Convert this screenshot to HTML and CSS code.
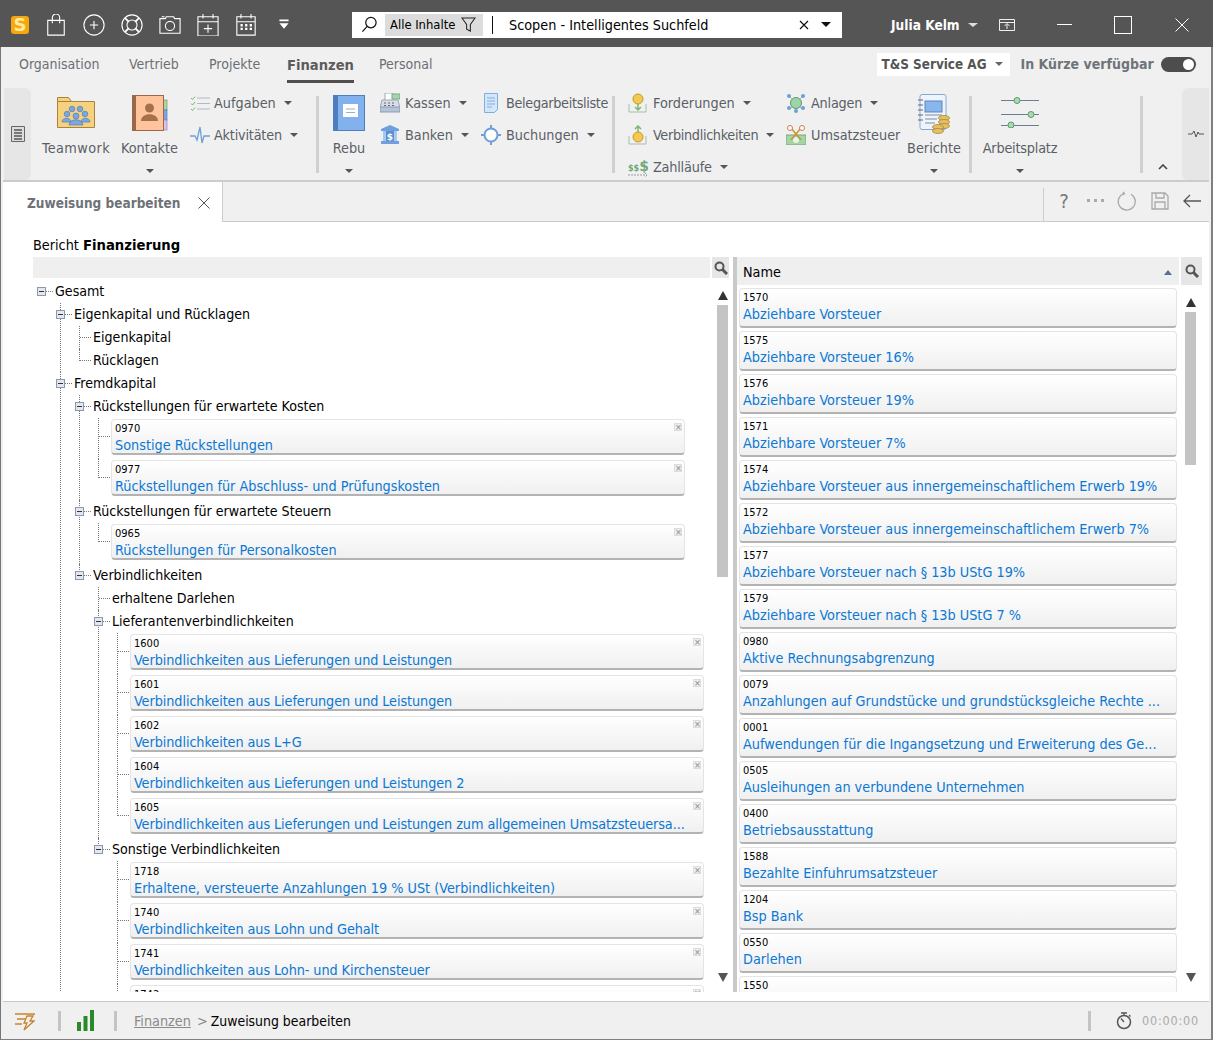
FILE: index.html
```html
<!DOCTYPE html>
<html lang="de">
<head>
<meta charset="utf-8">
<title>Zuweisung bearbeiten</title>
<link rel="stylesheet" href="styles.css">
</head>
<body>
<div class="app">
  <header class="topbar">
    <span class="logo">S</span>
    <svg class="top-ic" viewBox="0 0 24 24"><path d="M3 7h18v16H3zM8 10V4a4 4 0 0 1 8 0v6"/></svg>
    <svg class="top-ic" viewBox="0 0 24 24"><circle cx="12" cy="12" r="11"/><path d="M12 7.500v9M7.500 12h9"/></svg>
    <svg class="top-ic" viewBox="0 0 24 24"><circle cx="12" cy="12" r="11"/><circle cx="12" cy="12" r="5.500"/><path d="M4.500 4.500l4 4M19.500 4.500l-4 4M4.500 19.500l4-4M19.500 19.500l-4-4" class="thick"/></svg>
    <svg class="top-ic" viewBox="0 0 24 24"><path d="M1 5h6l1-2h8l1 2h6v16H1z"/><circle cx="12" cy="13" r="5"/><path d="M3 3h3"/></svg>
    <svg class="top-ic" viewBox="0 0 24 24"><path d="M1 3h22v21H1zM1 8.500h22M6.500 0v5M17.500 0v5M12 11.500v9M7.500 16h9"/></svg>
    <svg class="top-ic" viewBox="0 0 24 24"><path d="M2 3h20v20H2zM2 8.500h20M6.500 0v5M17.500 0v5"/><path class="dots" d="M6 11h2.500v2.500H6zM11 11h2.500v2.500H11zM16 11h2.500v2.500H16zM6 15h2.500v2.500H6zM11 15h2.500v2.500H11zM16 15h2.500v2.500H16z"/></svg>
    <svg class="top-ic" viewBox="0 0 24 24"><path class="solid" d="M7 6h10v2H7zM7 10h10l-5 6z"/></svg>
    <div class="search">
      <svg class="search-ic" viewBox="0 0 18 18"><circle cx="10.500" cy="7" r="5.500"/><path d="M6.500 11L1.500 16.500"/></svg>
      <div class="scope"><span>Alle Inhalte</span><svg viewBox="0 0 16 16"><path d="M1 1h14L10 8v7l-4-2V8z"/></svg></div>
      <span class="search-sep"></span>
      <span class="search-text">Scopen - Intelligentes Suchfeld</span>
      <svg class="search-x" viewBox="0 0 10 10"><path d="M1 1l8 8M9 1l-8 8"/></svg>
      <span class="tri-dark"></span>
    </div>
    <span class="user">Julia Kelm</span>
    <span class="tri-light"></span>
    <svg class="win-tray" viewBox="0 0 16 12"><path d="M.5 .5h15v11H.5zM.5 3.500h15M8 10V5M5.500 7L8 4.500 10.500 7"/></svg>
    <span class="win-min"></span>
    <span class="win-max"></span>
    <svg class="win-close" viewBox="0 0 14 14"><path d="M.5 .5l13 13M13.500 .5l-13 13"/></svg>
  </header>

  <div class="workspace">
  <nav class="navrow">
    <a class="nav-tab t1">Organisation</a>
    <a class="nav-tab t2">Vertrieb</a>
    <a class="nav-tab t3">Projekte</a>
    <a class="nav-tab t4 active">Finanzen</a>
    <a class="nav-tab t5">Personal</a>
    <div class="company"><span>T&amp;S Service AG</span><i class="tri-gray"></i></div>
    <span class="soon">In Kürze verfügbar</span>
    <span class="toggle"><i></i></span>
  </nav>

  <section class="ribbon">
    <div class="handle hl"><svg viewBox="0 0 14 16"><path d="M.5 .5h13v15H.5z" fill="#ddd" stroke="#666"/><path d="M3 4h8M3 7h8M3 10h8M3 13h8" stroke="#555" stroke-width="1.500"/></svg></div>

    <div class="big w-team">
      <svg class="big-ic" width="38" height="31" viewBox="0 0 38 31"><path d="M.5 4.500V.5h11l3 4h23v26H.500z" fill="#f6d27f" stroke="#a9823c"/><path d="M.5 4.500h14" stroke="#a9823c"/><g fill="#7ea6dd" stroke="#4e7fc0" stroke-width=".7"><circle cx="15" cy="12" r="2.800"/><circle cx="23" cy="12" r="2.800"/><circle cx="10" cy="17" r="2.800"/><circle cx="28" cy="17" r="2.800"/><circle cx="19" cy="19" r="3"/><path d="M5 25c0-5 9-5 9 0zM24 25c0-5 9-5 9 0zM12 28c0-7 14-7 14 0z"/></g></svg>
      <span class="big-label">Teamwork</span>
      <i class="tri-none"></i>
    </div>
    <div class="big w-kont">
      <svg class="big-ic" width="36" height="36" viewBox="0 0 36 36"><rect x="31" y="5" width="4" height="10" fill="#a9d6a9" stroke="#6f9a6f" stroke-width=".7"/><rect x="31" y="15" width="4" height="10" fill="#7ea6dd" stroke="#4e7fc0" stroke-width=".7"/><rect x="31" y="25" width="4" height="10" fill="#d8c4ea" stroke="#9c80b8" stroke-width=".7"/><rect x=".5" y=".5" width="31" height="35" fill="#ffc49c" stroke="#98694a"/><rect width="4" height="36" fill="#98694a"/><circle cx="17.500" cy="13" r="4.500" fill="#a5714d"/><path d="M9 26c0-9 17-9 17 0z" fill="#a5714d"/></svg>
      <span class="big-label">Kontakte</span>
      <i class="tri"></i>
    </div>

    <div class="col c-aufg">
      <div class="small"><svg class="s-ic" viewBox="0 0 20 16"><path d="M1 3l1.500 1.500L5 1.500M1 8.500l1.500 1.500L5 7M1 14l1.500 1.500L5 12.500" stroke="#74b874" fill="none"/><path d="M7 3h13M7 8.500h13M7 14h13" stroke="#b0b8c0" fill="none"/></svg><span>Aufgaben</span><i class="tri"></i></div>
      <div class="small"><svg class="s-ic" viewBox="0 0 20 18"><path d="M0 10h5l2 4 3-13 2 16 2-7h6" stroke="#6f9fd8" fill="none" stroke-width="1.300"/></svg><span class="tight">Aktivitäten</span><i class="tri"></i></div>
    </div>
    <span class="vsep s1"></span>

    <div class="big w-rebu">
      <svg class="big-ic" width="32" height="36" viewBox="0 0 32 36"><rect x=".5" y=".5" width="31" height="35" fill="#82b2ee" stroke="#4d7fc0"/><rect width="5" height="36" fill="#4d7fc0"/><rect x="10" y="9" width="15" height="13" fill="#fff"/><path d="M13 14h9M13 17.500h9" stroke="#9bb0c8"/></svg>
      <span class="big-label">Rebu</span>
      <i class="tri"></i>
    </div>

    <div class="col c-kass">
      <div class="small"><svg class="s-ic" viewBox="0 0 20 20"><rect x="5" y="0" width="8" height="8" fill="#fff" stroke="#9aa"/><rect x="12" y="1" width="8" height="5" fill="#a8d4a8" stroke="#7a9"/><path d="M2 7h16l2 8H0z" fill="#d9dee6" stroke="#9aa6b4"/><rect y="14" width="20" height="5" fill="#b5c4d8" stroke="#8a9cb4"/><path d="M4 10h2M8 10h2M12 10h2M4 12.500h2M8 12.500h2M12 12.500h2" stroke="#667"/></svg><span>Kassen</span><i class="tri"></i></div>
      <div class="small"><svg class="s-ic" viewBox="0 0 20 20"><path d="M10 0l9 4v2H1V4z" fill="#6f9fdc"/><rect x="3" y="6" width="14" height="10" fill="#a9c8f0"/><rect x="6" y="6" width="8" height="10" fill="#5a8fd4"/><rect x="1" y="16" width="18" height="3" fill="#6f9fdc"/><text x="10" y="15" class="bank-s">$</text></svg><span>Banken</span><i class="tri"></i></div>
    </div>
    <div class="col c-bele">
      <div class="small"><svg class="s-ic" viewBox="0 0 20 20"><path d="M3.500 .5h13v16l-3 3h-10z" fill="#d4e6fa" stroke="#7eaee0"/><path d="M6 5h8M6 8h8M6 11h8M6 14h5" stroke="#7eaee0"/></svg><span class="tighter">Belegarbeitsliste</span></div>
      <div class="small"><svg class="s-ic" viewBox="0 0 20 20"><circle cx="10" cy="10" r="6.500" fill="#fff" stroke="#6f9fd8" stroke-width="2"/><path d="M10 0v4M10 16v4M0 10h4M16 10h4" stroke="#6f9fd8" stroke-width="2"/></svg><span>Buchungen</span><i class="tri"></i></div>
    </div>
    <span class="vsep s2"></span>

    <div class="col c-ford">
      <div class="small"><svg class="s-ic" viewBox="0 0 20 20"><path d="M1 11v8h17v-8" fill="none" stroke="#a9bcb0"/><path d="M10 11v6m-3-3l3 3 3-3" stroke="#7ab87a" fill="none" stroke-width="1.500"/><circle cx="10" cy="6" r="5" fill="#f5c850" stroke="#c49a30"/></svg><span>Forderungen</span><i class="tri"></i></div>
      <div class="small"><svg class="s-ic" viewBox="0 0 20 20"><path d="M1 11v8h17v-8" fill="none" stroke="#a9bcb0"/><path d="M10 7V1M7 4l3-3 3 3" stroke="#7ab87a" fill="none" stroke-width="1.500"/><circle cx="10" cy="12" r="5" fill="#f5c850" stroke="#c49a30"/></svg><span class="tighter">Verbindlichkeiten</span><i class="tri"></i></div>
      <div class="small"><svg class="s-ic" viewBox="0 0 20 20"><text x="0" y="14" class="sss">$$<tspan class="sss-big">$</tspan></text><path d="M0 18h19m-2-2l2 2-2 2" stroke="#99a" fill="none" stroke-dasharray="2 1"/></svg><span class="tight">Zahlläufe</span><i class="tri"></i></div>
    </div>
    <div class="col c-anla">
      <div class="small"><svg class="s-ic" viewBox="0 0 20 20"><path d="M3 3l14 14M17 3L3 17" stroke="#9bb"/><circle cx="10" cy="10" r="5.500" fill="#9fd3a8" stroke="#5c9a6c"/><circle cx="3" cy="3" r="2" fill="#6f9fd8"/><circle cx="17" cy="3" r="2" fill="#6f9fd8"/><circle cx="3" cy="15" r="2" fill="#6f9fd8"/><circle cx="17" cy="15" r="2" fill="#6f9fd8"/><circle cx="10" cy="18" r="2" fill="#6f9fd8"/></svg><span class="tight">Anlagen</span><i class="tri"></i></div>
      <div class="small"><svg class="s-ic" viewBox="0 0 20 20"><rect y="10" width="20" height="10" fill="#a6d4a6" stroke="#78a878"/><circle cx="10" cy="15" r="3" fill="#e8f4e8"/><path d="M5 3l10 12M15 3L5 15" stroke="#c9953c" stroke-width="1.600"/><circle cx="4" cy="3" r="2.500" fill="#fff" stroke="#d07a50"/><circle cx="16" cy="3" r="2.500" fill="#fff" stroke="#d07a50"/></svg><span>Umsatzsteuer</span></div>
    </div>

    <div class="big w-beri">
      <svg class="big-ic tall" width="34" height="40" viewBox="0 0 34 40"><rect x="3" y=".5" width="26" height="35" rx="2" fill="#eef4fb" stroke="#87a9d0"/><path d="M1 6h5M1 11h5M1 16h5M1 21h5M1 26h5" stroke="#667"/><rect x="8" y="7" width="17" height="11" fill="#8ab6ee" stroke="#5a86bd"/><path d="M8 21h17M8 25h12M8 29h10" stroke="#7b8da0"/><g fill="#e7bf63" stroke="#a9863a" stroke-width=".8"><ellipse cx="27" cy="24" rx="5.500" ry="2.500"/><ellipse cx="27" cy="28" rx="5.500" ry="2.500"/><ellipse cx="27" cy="32" rx="5.500" ry="2.500"/><ellipse cx="21" cy="33" rx="5.500" ry="2.500"/><ellipse cx="21" cy="37" rx="5.500" ry="2.500"/></g></svg>
      <span class="big-label">Berichte</span>
      <i class="tri"></i>
    </div>
    <span class="vsep s3"></span>
    <div class="big w-arbe">
      <svg class="big-ic" width="38" height="31" viewBox="0 0 38 31"><path d="M0 3.500h38M0 17.500h38M0 28.500h38" stroke="#6b7f92"/><g fill="#a8dcae" stroke="#5c9a6c"><circle cx="16" cy="3.500" r="3"/><circle cx="30" cy="17.500" r="3"/><circle cx="10" cy="28" r="3"/></g></svg>
      <span class="big-label">Arbeitsplatz</span>
      <i class="tri"></i>
    </div>
    <span class="vsep s4"></span>
    <svg class="collapse" viewBox="0 0 10 6"><path d="M1 5l4-4 4 4" fill="none" stroke="#444" stroke-width="1.600"/></svg>
    <div class="handle hr"><svg viewBox="0 0 16 10"><path d="M0 5h4l2-3 2 6 2-5 1 2h5" fill="none" stroke="#555"/></svg></div>
  </section>

  <div class="tabstrip">
    <div class="doc-tab"><span>Zuweisung bearbeiten</span><svg viewBox="0 0 12 12"><path d="M.5 .5l11 11M11.500 .5l-11 11"/></svg></div>
    <div class="tools">
      <span class="help">?</span>
      <svg class="tool t-more" viewBox="0 0 18 4"><path d="M1 0h3v3H1zM8 0h3v3H8zM15 0h3v3h-3z"/></svg>
      <svg class="tool t-redo" viewBox="0 0 20 20"><path d="M7 2.500A8.500 8.500 0 1 0 14 3.200M6 1l1.500 1.700L5 4"/></svg>
      <svg class="tool t-save" viewBox="0 0 18 18"><path d="M1 1h13l3 3v13H1zM5 1v5h8V1M4 17v-7h10v7"/></svg>
      <svg class="tool t-back" viewBox="0 0 18 14"><path d="M18 7H1M7 1L1 7l6 6"/></svg>
    </div>
  </div>

  <main class="content">
    <h1 class="report">Bericht <b>Finanzierung</b></h1>
    <div class="panels">
      <section class="panel-left">
        <div class="head-left">
          <div class="bar"></div>
          <button class="find short"><svg viewBox="0 0 14 14"><circle cx="5.500" cy="5.500" r="4"/><path d="M8.500 8.500l4.500 4.500" class="fat"/></svg></button>
        </div>
        <div class="body-left">
          <div class="tree-clip">
            <ul class="tree root">
              <li class="node"><div class="row"><i class="box"></i><span>Gesamt</span></div>
                <ul class="tree">
                  <li class="node"><div class="row"><i class="box"></i><span>Eigenkapital und Rücklagen</span></div>
                    <ul class="tree">
                      <li class="leaf"><div class="row">Eigenkapital</div></li>
                      <li class="leaf"><div class="row">Rücklagen</div></li>
                    </ul>
                  </li>
                  <li class="node more"><div class="row"><i class="box"></i><span>Fremdkapital</span></div>
                    <ul class="tree">
                      <li class="node"><div class="row"><i class="box"></i><span>Rückstellungen für erwartete Kosten</span></div>
                        <ul class="tree">
                          <li class="item"><div class="card"><small>0970</small><i class="rm"></i><a>Sonstige Rückstellungen</a></div></li>
                          <li class="item"><div class="card"><small>0977</small><i class="rm"></i><a>Rückstellungen für Abschluss- und Prüfungskosten</a></div></li>
                        </ul>
                      </li>
                      <li class="node"><div class="row"><i class="box"></i><span>Rückstellungen für erwartete Steuern</span></div>
                        <ul class="tree">
                          <li class="item"><div class="card"><small>0965</small><i class="rm"></i><a>Rückstellungen für Personalkosten</a></div></li>
                        </ul>
                      </li>
                      <li class="node"><div class="row"><i class="box"></i><span>Verbindlichkeiten</span></div>
                        <ul class="tree">
                          <li class="leaf"><div class="row">erhaltene Darlehen</div></li>
                          <li class="node"><div class="row"><i class="box"></i><span>Lieferantenverbindlichkeiten</span></div>
                            <ul class="tree">
                              <li class="item"><div class="card v"><small>1600</small><i class="rm"></i><a>Verbindlichkeiten aus Lieferungen und Leistungen</a></div></li>
                              <li class="item"><div class="card v"><small>1601</small><i class="rm"></i><a>Verbindlichkeiten aus Lieferungen und Leistungen</a></div></li>
                              <li class="item"><div class="card v"><small>1602</small><i class="rm"></i><a>Verbindlichkeiten aus L+G</a></div></li>
                              <li class="item"><div class="card v"><small>1604</small><i class="rm"></i><a>Verbindlichkeiten aus Lieferungen und Leistungen 2</a></div></li>
                              <li class="item"><div class="card v"><small>1605</small><i class="rm"></i><a>Verbindlichkeiten aus Lieferungen und Leistungen zum allgemeinen Umsatzsteuersa...</a></div></li>
                            </ul>
                          </li>
                          <li class="node"><div class="row"><i class="box"></i><span>Sonstige Verbindlichkeiten</span></div>
                            <ul class="tree">
                              <li class="item"><div class="card"><small>1718</small><i class="rm"></i><a>Erhaltene, versteuerte Anzahlungen 19 % USt (Verbindlichkeiten)</a></div></li>
                              <li class="item"><div class="card v"><small>1740</small><i class="rm"></i><a>Verbindlichkeiten aus Lohn und Gehalt</a></div></li>
                              <li class="item"><div class="card v"><small>1741</small><i class="rm"></i><a>Verbindlichkeiten aus Lohn- und Kirchensteuer</a></div></li>
                              <li class="item more"><div class="card"><small>1742</small><i class="rm"></i></div></li>
                            </ul>
                          </li>
                        </ul>
                      </li>
                    </ul>
                  </li>
                </ul>
              </li>
            </ul>
          </div>
          <div class="scroll sl"><i class="up"></i><b class="thumb th-l"></b><i class="down"></i></div>
        </div>
      </section>

      <div class="splitter"></div>

      <section class="panel-right">
        <div class="head-right">
          <div class="name-bar"><span>Name</span><i class="sort"></i></div>
          <button class="find tall"><svg viewBox="0 0 14 14"><circle cx="5.500" cy="5.500" r="4"/><path d="M8.500 8.500l4.500 4.500" class="fat"/></svg></button>
        </div>
        <div class="body-right">
          <div class="list">
            <div class="lcard"><small>1570</small><a>Abziehbare Vorsteuer</a></div>
            <div class="lcard"><small>1575</small><a>Abziehbare Vorsteuer 16%</a></div>
            <div class="lcard"><small>1576</small><a>Abziehbare Vorsteuer 19%</a></div>
            <div class="lcard"><small>1571</small><a>Abziehbare Vorsteuer 7%</a></div>
            <div class="lcard"><small>1574</small><a>Abziehbare Vorsteuer aus innergemeinschaftlichem Erwerb 19%</a></div>
            <div class="lcard"><small>1572</small><a>Abziehbare Vorsteuer aus innergemeinschaftlichem Erwerb 7%</a></div>
            <div class="lcard"><small>1577</small><a>Abziehbare Vorsteuer nach § 13b UStG 19%</a></div>
            <div class="lcard"><small>1579</small><a>Abziehbare Vorsteuer nach § 13b UStG 7 %</a></div>
            <div class="lcard"><small>0980</small><a>Aktive Rechnungsabgrenzung</a></div>
            <div class="lcard"><small>0079</small><a>Anzahlungen auf Grundstücke und grundstücksgleiche Rechte ...</a></div>
            <div class="lcard"><small>0001</small><a>Aufwendungen für die Ingangsetzung und Erweiterung des Ge...</a></div>
            <div class="lcard"><small>0505</small><a>Ausleihungen an verbundene Unternehmen</a></div>
            <div class="lcard"><small>0400</small><a>Betriebsausstattung</a></div>
            <div class="lcard"><small>1588</small><a>Bezahlte Einfuhrumsatzsteuer</a></div>
            <div class="lcard"><small>1204</small><a>Bsp Bank</a></div>
            <div class="lcard"><small>0550</small><a>Darlehen</a></div>
            <div class="lcard"><small>1550</small></div>
          </div>
          <div class="scroll sr"><i class="up"></i><b class="thumb th-r"></b><i class="down"></i></div>
        </div>
      </section>
    </div>
  </main>

  <footer class="status">
    <svg class="st-bolt" width="20" height="20" viewBox="0 0 20 20"><path d="M0 3h20M2 8h9M0 13h7" stroke="#c8842c" stroke-width="1.500" fill="none"/><path d="M12 5h6l-3 5h4L9 19l3-7H9z" fill="#f0f0f0" stroke="#c8842c" stroke-width="1.300"/></svg>
    <span class="st-sep a"></span>
    <svg class="st-bars" width="17" height="21" viewBox="0 0 17 21"><rect y="12" width="4" height="9" fill="#2a8a2a"/><rect x="6.500" y="6" width="4" height="15" fill="#2a8a2a"/><rect x="13" y="0" width="4" height="21" fill="#2a8a2a"/></svg>
    <span class="st-sep b"></span>
    <a class="crumb">Finanzen</a><span class="gt">&gt;</span><span class="crumb-now">Zuweisung bearbeiten</span>
    <span class="st-sep c"></span>
    <svg class="st-clock" width="16" height="18" viewBox="0 0 16 18"><circle cx="8" cy="10" r="6.500" fill="none" stroke="#555" stroke-width="1.500"/><path d="M5 1h6M8 1v3M13 3l1.500 1.500M8 10L5 6.500" stroke="#555" stroke-width="1.300" fill="none"/></svg>
    <span class="time">00:00:00</span>
  </footer>
  </div>
</div>
</body>
</html>
```

FILE: styles.css
```css
* { box-sizing: border-box; }
html, body { margin: 0; padding: 0; background: #fff; }
body { font-family: "DejaVu Sans", sans-serif; font-stretch: condensed; font-size: 14.300px; color: #000; }
.app { width: 1213px; height: 1040px; display: flex; flex-direction: column; overflow: hidden; }
.workspace { flex: 1; min-height: 0; display: flex; flex-direction: column; background: #f0f0f0; padding: 0 2px; border-left: 1px solid #777; border-right: 2px solid #808080; border-bottom: 1px solid #7e7e7e; }
ul { list-style: none; margin: 0; padding: 0; }
svg { display: block; flex: none; }

/* title bar */
.topbar { height: 47px; flex: none; padding-top: 2px; background: #555; display: flex; align-items: center; color: #fff; }
.logo { width: 18px; height: 18px; margin: 0 9px 0 11px; border-radius: 3px; background: #f6a80d; color: #ffeaa0; font: bold 18px/18px "DejaVu Sans", sans-serif; text-align: center; }
.top-ic { width: 22px; height: 22px; margin-left: 16px; fill: none; stroke: #fff; stroke-width: 1.200; }
.top-ic:first-of-type { margin-left: 7px; }
.top-ic .thick { stroke-width: 2; }
.top-ic .dots { fill: #fff; stroke: none; }
.top-ic .solid { fill: #fff; stroke: none; }
.search { width: 490px; height: 26px; margin-left: 57px; background: #fff; display: flex; align-items: center; color: #000; }
.search-ic { width: 17px; height: 17px; margin-left: 9px; fill: none; stroke: #111; stroke-width: 1.300; }
.scope { width: 98px; height: 22px; margin-left: 7px; background: #dcdcdc; display: flex; align-items: center; padding-left: 5px; font-size: 12.900px; }
.scope span { width: 71px; white-space: nowrap; }
.scope svg { width: 15px; height: 15px; fill: none; stroke: #222; stroke-width: 1.100; }
.search-sep { width: 1px; height: 18px; margin-left: 9px; background: #111; }
.search-text { margin-left: 16px; flex: 1; }
.search-x { width: 10px; height: 10px; fill: none; stroke: #111; stroke-width: 1.200; }
.tri-dark { width: 0; height: 0; margin: 0 11px 0 12px; border-left: 5px solid transparent; border-right: 5px solid transparent; border-top: 5px solid #111; }
.user { margin-left: 49px; font-weight: bold; font-size: 13.600px; width: 75px; white-space: nowrap; }
.tri-light { width: 0; height: 0; margin-left: 2px; border-left: 5px solid transparent; border-right: 5px solid transparent; border-top: 4px solid #ddd; }
.win-tray { width: 16px; height: 12px; margin-left: 21px; fill: none; stroke: #eee; }
.win-min { width: 15px; height: 1px; margin-left: 42px; background: #fff; }
.win-max { width: 18px; height: 18px; margin-left: 42px; border: 1px solid #fff; }
.win-close { width: 14px; height: 14px; margin-left: 43px; fill: none; stroke: #fff; }

/* module tabs */
.navrow { height: 38px; flex: none; display: flex; align-items: center; padding-bottom: 4px; color: #6b6f75; font-size: 14px; }
.t1 { margin-left: 16px; width: 110px; }
.t2 { width: 80px; }
.t3 { width: 78px; }
.t4 { width: 92px; }
.active { font-weight: bold; font-size: 14.600px; position: relative; color: #5c5c5c; }
.active::after { content: ""; position: absolute; left: 0; top: 24px; width: 67px; height: 3px; background: #4e4e4e; }
.company { width: 133px; height: 23px; margin-left: 444px; background: #fff; display: flex; align-items: center; padding-left: 5px; font-weight: bold; color: #555; font-size: 13.400px; }
.company span { width: 113px; white-space: nowrap; }
.tri-gray { width: 0; height: 0; border-left: 4px solid transparent; border-right: 4px solid transparent; border-top: 4px solid #666; }
.soon { margin-left: 11px; width: 140px; font-weight: bold; color: #6f747a; font-size: 14px; white-space: nowrap; }
.toggle { width: 35px; height: 15px; border-radius: 8px; background: #4d4d4d; display: flex; justify-content: flex-end; align-items: center; padding-right: 2px; }
.toggle i { width: 11px; height: 11px; border-radius: 50%; background: #fff; }

/* ribbon */
.ribbon { height: 97px; flex: none; display: flex; border-bottom: 2px solid #ccc; color: #5a5f66; padding-top: 3px; }
.handle { width: 27px; flex: none; background: #e6e6e6; display: flex; align-items: center; justify-content: center; }
.hl { margin-left: 1px; border-radius: 0 6px 6px 0; }
.hl svg { width: 14px; height: 16px; }
.hr { margin-left: auto; border-radius: 6px 0 0 6px; }
.hr svg { width: 16px; height: 10px; }
.big { display: flex; flex-direction: column; align-items: center; flex: none; }
.big-ic { height: 36px; margin-top: 7px; }
.big-label { margin-top: 9px; line-height: 17px; white-space: nowrap; }
.w-team { width: 84px; margin-left: 3px; }
.w-team .big-ic { margin-top: 9px; height: 31px; margin-bottom: 3px; }
.w-team .big-label { letter-spacing: .4px; }
.w-kont { width: 63px; }
.w-rebu { width: 40px; margin-left: 10px; }
.w-beri { width: 56px; margin-left: 2px; }
.w-beri .big-ic { height: 40px; margin-top: 6px; margin-bottom: -3px; }
.w-arbe { width: 76px; margin-left: 10px; }
.w-arbe .big-ic { height: 31px; margin-top: 9px; margin-bottom: 3px; }
.w-arbe .big-label { letter-spacing: -.2px; }
.big .tri, .big .tri-none { margin-top: 12px; }
.tri { width: 0; height: 0; display: inline-block; border-left: 4.500px solid transparent; border-right: 4.500px solid transparent; border-top: 4.500px solid #555; }
.tri-none { height: 5px; }
.col { display: flex; flex-direction: column; flex: none; margin-top: -1px; }
.small { height: 32px; flex: none; display: flex; align-items: center; white-space: nowrap; }
.small span { margin-left: 4px; }
.small .tri { margin-left: 8px; }
.tight { letter-spacing: -.2px; }
.tighter { letter-spacing: -.33px; }
.s-ic { width: 20px; height: 20px; }
.c-aufg { width: 125px; margin-left: 9px; }
.c-kass { width: 100px; margin-left: 11px; }
.c-kass .small span { margin-left: 5px; }
.c-bele { width: 133px; }
.c-bele .s-ic { margin-left: 1px; }
.c-bele .small span { margin-left: 5px; }
.c-ford { width: 158px; margin-left: 13px; }
.c-ford .small span { margin-left: 5px; }
.c-anla { width: 118px; }
.c-anla .small span { margin-left: 5px; }
.bank-s { font: bold 9px "DejaVu Sans", sans-serif; fill: #fff; text-anchor: middle; }
.sss { font: bold 8px "DejaVu Sans", sans-serif; fill: #6fa87c; }
.sss-big { font-size: 14px; }
.vsep { width: 3px; height: 77px; margin-top: 8px; background: #d0d0d0; flex: none; }
.s1 { margin-left: 1px; }
.s2 { margin-left: -1px; }
.s3 { margin-left: 7px; }
.s4 { margin-left: 82px; }
.collapse { width: 10px; height: 6px; margin-top: 76px; margin-left: 15px; }

/* document tab strip */
.tabstrip { height: 40px; flex: none; display: flex; border-bottom: 1px solid #ccc; }
.doc-tab { width: 220px; height: 40px; background: #fff; border-right: 1px solid #ccc; display: flex; align-items: center; padding: 2px 0 0 24px; font-weight: bold; color: #6e7277; font-size: 13.500px; }
.doc-tab span { width: 171px; white-space: nowrap; }
.doc-tab svg { width: 12px; height: 12px; fill: none; stroke: #555; }
.tools { flex: 1; display: flex; align-items: center; margin-left: 820px; height: 33px; margin-top: 6px; padding-bottom: 8px; border-left: 1px solid #ccc; }
.help { margin-left: 13px; width: 14px; font-size: 20px; font-weight: normal; color: #777; text-align: center; }
.tool { fill: none; stroke: #a9a9a9; stroke-width: 1.300; }
.t-more { width: 18px; height: 4px; margin-left: 15px; fill: #a9a9a9; stroke: none; }
.t-redo { width: 20px; height: 20px; margin-left: 13px; }
.t-save { width: 18px; height: 18px; margin-left: 14px; }
.t-back { width: 18px; height: 14px; margin-left: 14px; stroke: #555; }

/* content */
.content { flex: 1; min-height: 0; background: #fff; padding: 13px 0 9px 30px; display: flex; flex-direction: column; }
.report { margin: 0 0 2px; font-size: 14.300px; font-weight: normal; line-height: 19px; }
.report b { font-size: 14.700px; }
.panels { flex: 1; min-height: 0; display: flex; }
.panel-left { width: 698px; flex: none; display: flex; flex-direction: column; }
.head-left { display: flex; height: 21px; flex: none; }
.bar { width: 677px; background: #efefef; }
.find { border: 0; padding: 0; margin-left: 2px; background: #e6e6e6; display: flex; align-items: flex-start; justify-content: center; padding-top: 4px; }
.find svg { width: 14px; height: 14px; fill: none; stroke: #555; stroke-width: 2; }
.find .fat { stroke-width: 3; }
.find.short { width: 17px; height: 21px; }
.find.tall { width: 21px; height: 28px; padding-top: 7px; }
.body-left { flex: 1; min-height: 0; display: flex; }
.tree-clip { width: 681px; padding: 2px 0 0 8px; overflow: hidden; }
.tree { position: relative; }
.tree .tree { margin-left: 19px; }
.tree li { position: relative; }
.tree li::before { content: ""; position: absolute; left: 0; top: 0; bottom: 0; border-left: 1px dotted #777; }
.tree li:last-child::before { bottom: auto; height: 12px; }
.tree li.more::before { bottom: 0; height: auto; }
.tree li.item:last-child::before { height: 19px; }
.tree li.more.item:last-child::before { height: auto; }
.tree li::after { content: ""; position: absolute; left: 1px; top: 11px; width: 11px; border-top: 1px dotted #777; }
.tree li.item::after { top: 18px; }
.root > li::before { display: none; }
.root > li::after { left: 5px; width: 7px; }
.row { height: 23px; line-height: 22px; font-size: 14.100px; padding-left: 14px; position: relative; white-space: nowrap; }
.box { position: absolute; z-index: 1; left: -4px; top: 7px; width: 9px; height: 9px; border: 1px solid #8a9aae; background: linear-gradient(#333, #333) center/5px 1px no-repeat, #e4e8ee; }
.item { padding: 1px 0 4px 13px; }
.card { width: 574px; height: 36px; border: 1px solid #e4e4e4; border-bottom: 2px solid #b3b3b3; border-radius: 4px; background: linear-gradient(#fff, #f0f0f0); padding: 2px 3px 0 3px; position: relative; }
.card small, .lcard small { display: block; font-size: 11px; line-height: 13px; color: #000; }
.card a, .lcard a { display: block; color: #0b78d4; line-height: 19px; white-space: nowrap; overflow: hidden; }
.card a { margin-top: 1px; }
.card.v a { letter-spacing: -.08px; }
.rm { position: absolute; right: 2px; top: 3px; width: 8px; height: 8px; background: #eee; border: 1px solid #ddd; }
.rm::after { content: "×"; display: block; font-size: 9px; line-height: 6px; text-align: center; color: #888; font-style: normal; }
.scroll { display: flex; flex-direction: column; align-items: center; flex: none; width: 17px; }
.sl { padding-top: 13px; }
.sr { padding-top: 13px; margin-left: 6px; width: 11px; }
.up { width: 0; height: 0; border-left: 5px solid transparent; border-right: 5px solid transparent; border-bottom: 9px solid #333; }
.down { width: 0; height: 0; margin-top: auto; margin-bottom: 10px; border-left: 5px solid transparent; border-right: 5px solid transparent; border-top: 9px solid #555; }
.thumb { display: block; width: 11px; background: #c4c4c4; margin-top: 5px; }
.th-l { height: 272px; }
.th-r { height: 153px; }
.splitter { width: 4px; background: #c9c9c9; flex: none; margin-left: 2px; }
.panel-right { width: 465px; flex: none; display: flex; flex-direction: column; }
.head-right { height: 28px; flex: none; display: flex; }
.name-bar { width: 442px; background: #efefef; display: flex; align-items: center; justify-content: space-between; padding: 2px 7px 0 6px; }
.sort { width: 0; height: 0; border-left: 4px solid transparent; border-right: 4px solid transparent; border-bottom: 5px solid #56708f; }
.body-right { flex: 1; min-height: 0; display: flex; }
.list { width: 442px; padding: 3px 2px 0 2px; overflow: hidden; }
.lcard { height: 40px; margin-bottom: 3px; border: 1px solid #e4e4e4; border-bottom: 2px solid #b3b3b3; border-radius: 4px; background: linear-gradient(#fff, #f0f0f0); padding: 2px 3px 0 3px; }
.lcard a { line-height: 20px; }

/* status bar */
.status { height: 38px; flex: none; display: flex; align-items: center; background: #f0f0f0; border-top: 1px solid #c8c8c8; }
.st-bolt { margin-left: 12px; }
.st-sep { width: 3px; height: 20px; background: #c4c4c4; flex: none; }
.st-sep.a { margin-left: 23px; }
.st-bars { margin-left: 16px; }
.st-sep.b { margin-left: 20px; }
.crumb { margin-left: 17px; color: #8a8a8a; text-decoration: underline; }
.gt { margin: 0 3px 0 6px; color: #888; }
.crumb-now { color: #000; flex: 1; font-size: 13.900px; }
.st-sep.c { margin-right: 25px; }
.time { width: 57px; margin: 0 10px 0 10px; font-size: 12.500px; color: #aaa; letter-spacing: .8px; white-space: nowrap; }
```
